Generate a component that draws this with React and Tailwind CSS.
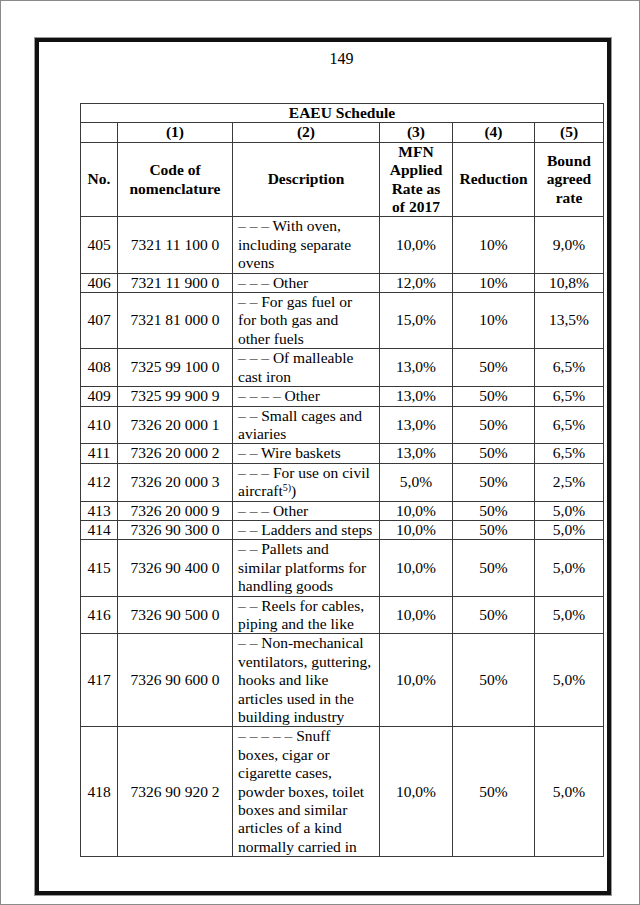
import React from 'react';

const rows = [
  { no: '405', code: '7321 11 100 0', desc: ['– – – With oven,', 'including separate', 'ovens'], mfn: '10,0%', red: '10%', bound: '9,0%' },
  { no: '406', code: '7321 11 900 0', desc: ['– – – Other'], mfn: '12,0%', red: '10%', bound: '10,8%' },
  { no: '407', code: '7321 81 000 0', desc: ['– – For gas fuel or', 'for both gas and', 'other fuels'], mfn: '15,0%', red: '10%', bound: '13,5%' },
  { no: '408', code: '7325 99 100 0', desc: ['– – – Of malleable', 'cast iron'], mfn: '13,0%', red: '50%', bound: '6,5%' },
  { no: '409', code: '7325 99 900 9', desc: ['– – – – Other'], mfn: '13,0%', red: '50%', bound: '6,5%' },
  { no: '410', code: '7326 20 000 1', desc: ['– – Small cages and', 'aviaries'], mfn: '13,0%', red: '50%', bound: '6,5%' },
  { no: '411', code: '7326 20 000 2', desc: ['– – Wire baskets'], mfn: '13,0%', red: '50%', bound: '6,5%' },
  { no: '412', code: '7326 20 000 3', desc: ['– – – For use on civil', 'aircraft'], sup: true, mfn: '5,0%', red: '50%', bound: '2,5%' },
  { no: '413', code: '7326 20 000 9', desc: ['– – – Other'], mfn: '10,0%', red: '50%', bound: '5,0%' },
  { no: '414', code: '7326 90 300 0', desc: ['– – Ladders and steps'], mfn: '10,0%', red: '50%', bound: '5,0%' },
  { no: '415', code: '7326 90 400 0', desc: ['– – Pallets and', 'similar platforms for', 'handling goods'], mfn: '10,0%', red: '50%', bound: '5,0%' },
  { no: '416', code: '7326 90 500 0', desc: ['– – Reels for cables,', 'piping and the like'], mfn: '10,0%', red: '50%', bound: '5,0%' },
  { no: '417', code: '7326 90 600 0', desc: ['– – Non-mechanical', 'ventilators, guttering,', 'hooks and like', 'articles used in the', 'building industry'], mfn: '10,0%', red: '50%', bound: '5,0%' },
  { no: '418', code: '7326 90 920 2', desc: ['– – – – – Snuff', 'boxes, cigar or', 'cigarette cases,', 'powder boxes, toilet', 'boxes and similar', 'articles of a kind', 'normally carried in'], mfn: '10,0%', red: '50%', bound: '5,0%' },
];

const cell = 'border border-[#3a3a3a] p-0 align-middle';

const App = () => {
  return (
    <div className="w-[640px] h-[905px] bg-white overflow-hidden border border-[#8a8a8a] font-['Liberation_Serif',serif] text-black">
      <div className="ml-[34px] mt-[37px] w-[576px] h-[857px] border-[4px] border-[#111] shadow-[0_0_0_1px_#9a9a9a]">
        <div className="pl-[41px] pr-[4px]">
          <div className="pt-[7px] mb-[34px] text-center text-[16px] leading-[20px]">149</div>

          <table className="w-[523px] border-collapse table-fixed text-[15.5px] leading-[18.4px]">
            <colgroup>
              <col className="w-[37px]" />
              <col className="w-[115px]" />
              <col className="w-[147px]" />
              <col className="w-[73px]" />
              <col className="w-[82px]" />
              <col className="w-[69px]" />
            </colgroup>
            <tbody>
              <tr>
                <td colSpan={6} className={`${cell} text-center font-bold`}>EAEU Schedule</td>
              </tr>
              <tr className="font-bold text-center">
                <td className={cell}></td>
                <td className={cell}>(1)</td>
                <td className={cell}>(2)</td>
                <td className={cell}>(3)</td>
                <td className={cell}>(4)</td>
                <td className={cell}>(5)</td>
              </tr>
              <tr className="font-bold text-center">
                <td className={cell}>No.</td>
                <td className={cell}>Code of<br />nomenclature</td>
                <td className={cell}>Description</td>
                <td className={cell}>MFN<br />Applied<br />Rate as<br />of 2017</td>
                <td className={cell}>Reduction</td>
                <td className={cell}>Bound<br />agreed<br />rate</td>
              </tr>
              {rows.map((r) => (
                <tr key={r.no}>
                  <td className={`${cell} text-center`}>{r.no}</td>
                  <td className={`${cell} text-center`}>{r.code}</td>
                  <td className={`${cell} pl-[5px]`}>
                    {r.desc.map((line, i) => (
                      <span key={i} className="block whitespace-nowrap">
                        {line}
                        {r.sup && i === r.desc.length - 1 && (
                          <>
                            <sup className="text-[10px]">5)</sup>)
                          </>
                        )}
                      </span>
                    ))}
                  </td>
                  <td className={`${cell} text-center`}>{r.mfn}</td>
                  <td className={`${cell} text-center`}>{r.red}</td>
                  <td className={`${cell} text-center`}>{r.bound}</td>
                </tr>
              ))}
            </tbody>
          </table>
        </div>
      </div>
    </div>
  );
};

export default App;
